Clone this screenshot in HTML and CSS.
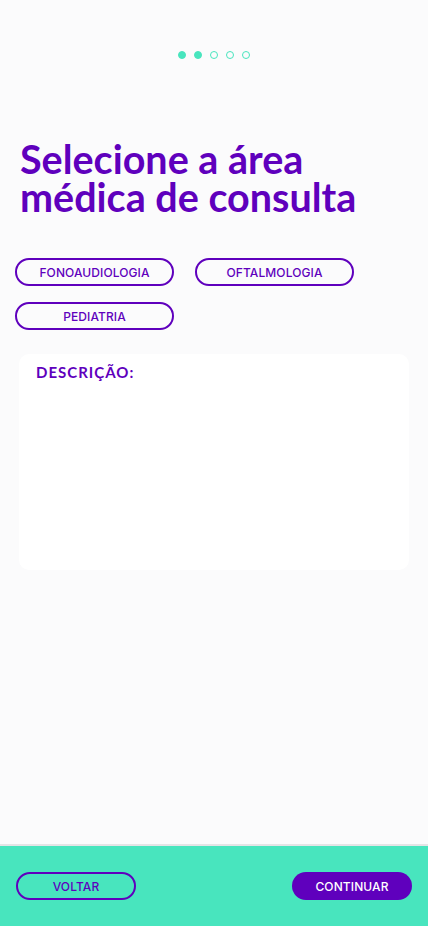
FILE: index.html
```html
<!DOCTYPE html>
<html lang="pt-BR">
<head>
    <meta charset="UTF-8">
    <meta name="viewport" content="width=device-width, initial-scale=1.0">
    <title>Área médica</title>
    <link rel="stylesheet" href="styles.css">
</head>
<body>
    <div class="page">
        <main class="content">
            <div class="steps">
                <span class="dot filled"></span>
                <span class="dot filled"></span>
                <span class="dot"></span>
                <span class="dot"></span>
                <span class="dot"></span>
            </div>

            <h1 class="title">Selecione a área médica de consulta</h1>

            <div class="areas">
                <button class="chip">FONOAUDIOLOGIA</button>
                <button class="chip">OFTALMOLOGIA</button>
                <button class="chip">PEDIATRIA</button>
            </div>

            <div class="description">
                <h2>DESCRIÇÃO:</h2>
            </div>
        </main>

        <footer class="actions">
            <button class="btn btn-outline">VOLTAR</button>
            <button class="btn btn-solid">CONTINUAR</button>
        </footer>
    </div>
</body>
</html>
```

FILE: styles.css
```css
body {
    margin: 0;
    padding: 0;
    background-color: #fbfbfc;
    font-family: Inter, "Noto Sans", sans-serif;
    color: #5f00bd;
}

.page {
    height: 926px;
    display: flex;
    flex-direction: column;
}

.content {
    flex: 1;
}

.steps {
    display: flex;
    justify-content: center;
    gap: 8px;
    padding-top: 51px;
}

.dot {
    width: 6px;
    height: 6px;
    border: 1px solid #48e5be;
    border-radius: 50%;
}

.dot.filled {
    background-color: #48e5be;
}

.title {
    font-family: Lato, "Open Sans", sans-serif;
    font-weight: 700;
    font-size: 39.5px;
    line-height: 38px;
    letter-spacing: 0;
    margin: 81px 20px 0;
    color: #5f00bd;
    max-width: 360px;
}

.areas {
    display: grid;
    grid-template-columns: 159px 159px;
    column-gap: 21px;
    row-gap: 16px;
    padding: 0 15px;
    margin-top: 42px;
}

.chip {
    height: 28px;
    border: 2px solid #5f00bd;
    border-radius: 14px;
    background: transparent;
    color: #5f00bd;
    font-family: Inter, sans-serif;
    font-size: 12px;
    font-weight: 500;
    letter-spacing: 0.1px;
    padding: 0;
}

.description {
    background-color: #fff;
    border-radius: 10px;
    margin: 24px 19px 0;
    height: 216px;
    padding: 9px 17px;
    box-sizing: border-box;
}

.description h2 {
    margin: 0;
    font-family: Lato, "Open Sans", sans-serif;
    font-size: 15px;
    font-weight: 700;
    letter-spacing: 1px;
    color: #5f00bd;
}

.actions {
    height: 82px;
    background-color: #48e5be;
    border-top: 2px solid #e4e4e6;
    display: flex;
    justify-content: space-between;
    align-items: flex-start;
    padding: 26px 16px 0;
    box-sizing: border-box;
}

.btn {
    width: 120px;
    height: 28px;
    border-radius: 14px;
    font-family: Inter, sans-serif;
    font-size: 12px;
    font-weight: 500;
    letter-spacing: 0.1px;
    padding: 0;
}

.btn-outline {
    background: transparent;
    border: 2px solid #5f00bd;
    color: #5f00bd;
}

.btn-solid {
    background-color: #5f00bd;
    border: none;
    color: #fff;
}
```
